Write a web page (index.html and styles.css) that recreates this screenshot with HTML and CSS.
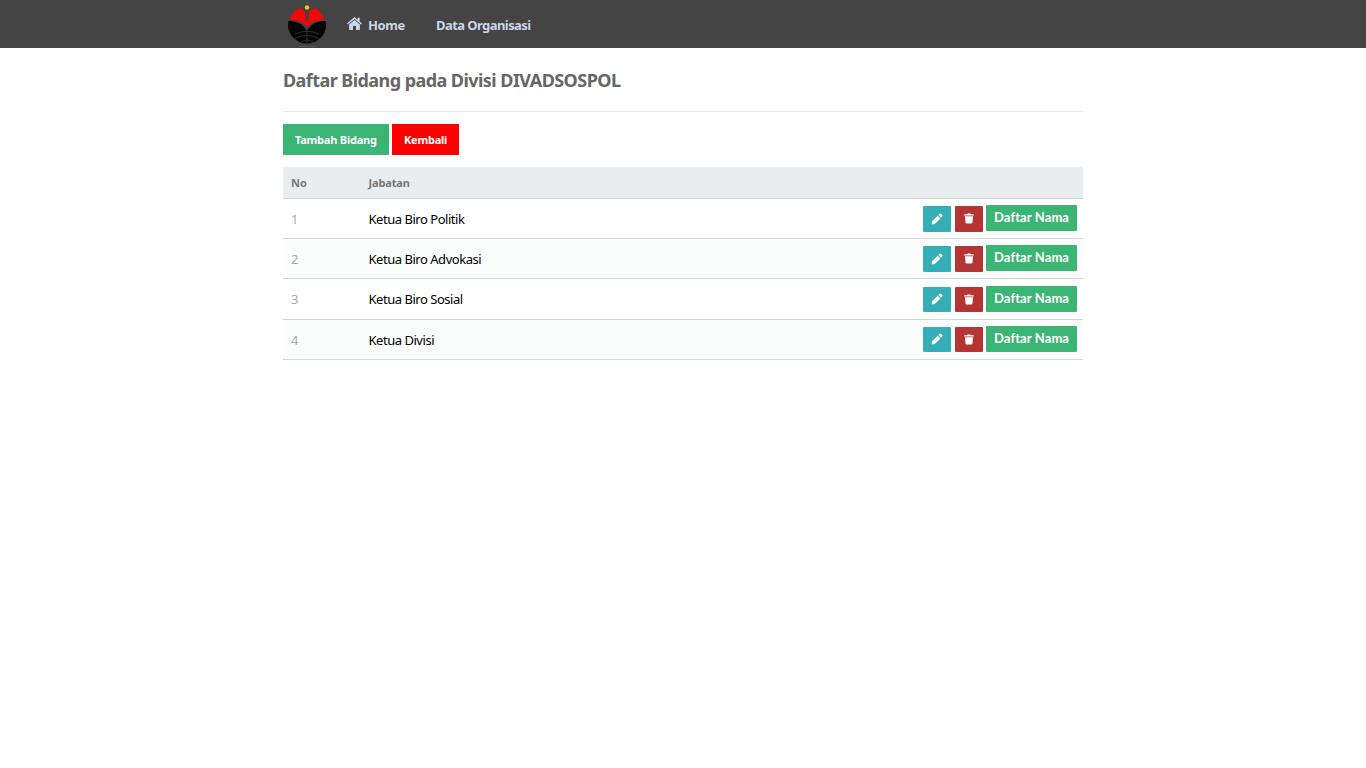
FILE: index.html
```html
<!DOCTYPE html>
<html lang="id">
<head>
<meta charset="utf-8">
<title>Daftar Bidang</title>
<link rel="stylesheet" href="styles.css">
</head>
<body>
<svg width="0" height="0" class="defs">
  <symbol id="pencil" viewBox="0 0 12 12"><path d="M.5 11.5l.6-3.200L6.600 2.700l2.700 2.700-5.500 5.500zM7.200 2.100L8.500.8q.7-.6 1.400 0l1.300 1.300q.6.7 0 1.400L9.900 4.800z"/></symbol>
  <symbol id="trash" viewBox="0 0 10 11"><path d="M.2 1.200h2.900L3.600.4h2.800l.5.800h2.900v1.300H.2zM1 3.200h8l-.5 6.400q-.1 1-1.100 1H2.600q-1 0-1.100-1z"/></symbol>
</svg>
<header class="topbar">
  <nav class="container nav">
    <svg class="logo" viewBox="0 0 40 46">
      <path fill="#f90505" d="M2.500 17.500Q6 9.500 12.500 6L18 9.500 18.500 17H21.500L22 9.500 27.500 6Q34 9.500 37.500 17.500 26 17.500 20 25 14 17.500 2.500 17.500z"/>
      <path fill="#050505" d="M1.500 19Q14 18 20 29 26 18 38.500 19 40.500 28 34 35.500 28 41.500 20 41.500 12 41.500 6 35.500-.5 28 1.500 19z"/>
      <path fill="none" stroke="#70302d" d="M18.200 8.500L19 20M21.800 8.500L21 20"/>
      <path fill="none" stroke="#333" stroke-width=".9" d="M8 32Q20 26.500 32 32M8 36.500Q20 30.500 32 36.500M14 40Q20 36 26 40M20 29V41"/>
      <circle cx="20" cy="5.500" r="2.200" fill="#dccb1c"/>
      <path stroke="#555" d="M12 44.500H28"/>
    </svg>
    <a class="home"><svg class="house" viewBox="0 0 15 13"><path d="M7.500 0L10.600 2.700V.7h2.100v3.800L15 6.600l-.9 1L7.500 2 .9 7.600 0 6.600z"/><path d="M7.500 2.900l5.400 4.600V13H9V9H6v4H2.100V7.500z"/></svg><span>Home</span></a>
    <a class="data"><span>Data Organisasi</span></a>
  </nav>
</header>
<main class="container">
  <h1>Daftar Bidang pada Divisi DIVADSOSPOL</h1>
  <div class="actions"><a class="add">Tambah Bidang</a><a class="back">Kembali</a></div>
  <div class="table">
    <div class="head"><b class="no">No</b><b class="position">Jabatan</b></div>
    <div class="row"><span class="no">1</span><span class="name">Ketua Biro Politik</span><div class="tools"><a class="edit"><svg><use href="#pencil"/></svg></a><a class="delete"><svg><use href="#trash"/></svg></a><a class="list">Daftar Nama</a></div></div>
    <div class="row even"><span class="no">2</span><span class="name">Ketua Biro Advokasi</span><div class="tools"><a class="edit"><svg><use href="#pencil"/></svg></a><a class="delete"><svg><use href="#trash"/></svg></a><a class="list">Daftar Nama</a></div></div>
    <div class="row tall"><span class="no">3</span><span class="name">Ketua Biro Sosial</span><div class="tools"><a class="edit"><svg><use href="#pencil"/></svg></a><a class="delete"><svg><use href="#trash"/></svg></a><a class="list">Daftar Nama</a></div></div>
    <div class="row even"><span class="no">4</span><span class="name">Ketua Divisi</span><div class="tools"><a class="edit"><svg><use href="#pencil"/></svg></a><a class="delete"><svg><use href="#trash"/></svg></a><a class="list">Daftar Nama</a></div></div>
  </div>
</main>
</body>
</html>
```
FILE: styles.css
```css
* { box-sizing: border-box; }
body { margin: 0; background: #fff; font-family: "Segoe UI", "Noto Sans", "Open Sans", sans-serif; white-space: nowrap; }
.defs { display: block; height: 0; }
.container { width: 800px; margin: 0 auto; }
.topbar { height: 48px; background: #444; }
.nav { display: flex; height: 48px; padding-left: 4px; color: #cad5e8; font-size: 13px; font-weight: 700; line-height: 20px; }
.logo { width: 40px; height: 46px; margin-top: 2px; }
.home { display: flex; width: 89px; margin-left: 20px; padding-top: 15px; letter-spacing: -.4px; }
.house { width: 15px; height: 13px; margin: 2px 6px 0 0; fill: #cad5e8; }
.data { padding-top: 15px; letter-spacing: -.57px; }
h1 { height: 64px; margin: 0 0 12px; padding-top: 20px; border-bottom: 1px solid #e8e8e8; color: #666; font-size: 18px; line-height: 25px; letter-spacing: -.56px; }
.actions { display: flex; gap: 3px; height: 31px; margin-bottom: 12px; }
.actions a { padding-left: 12px; color: #fff; font-size: 11px; font-weight: 700; line-height: 31px; letter-spacing: -.22px; }
.add { width: 106px; background: #3bb573; }
.back { width: 67px; background: #f00; }
.head { display: flex; height: 32px; padding-left: 8px; background: #e9edf0; border-bottom: 1px solid #d0d7dd; color: #777; font-size: 11px; line-height: 32px; }
.position { letter-spacing: -.15px; }
.no { width: 77.500px; }
.row { display: flex; height: 40px; padding: 0 6px 0 8px; border-bottom: 1px solid #d0d7dd; font-size: 13px; line-height: 41px; }
.row .no { color: #aaa; }
.name { flex: 1; color: #000; letter-spacing: -.47px; }
.even { background: #fbfdfc; }
.tall { height: 41px; }
.tools { display: flex; gap: 4px; padding-top: 6px; }
.tools a { height: 26px; border-radius: 1px; }
.edit, .delete { display: flex; align-items: center; justify-content: center; width: 28px; margin-top: 1px; padding-bottom: 1px; }
.edit { background: #36aeb8; }
.delete { background: #b53535; }
.tools svg { width: 12px; height: 12px; fill: #fff; }
.tools .delete svg { width: 10px; height: 11px; }
.tools .list { width: 91px; margin-left: -1px; padding-left: 8px; background: #3bb573; color: #fff; font-family: "Lato", sans-serif; font-size: 13px; font-weight: 700; line-height: 25px; letter-spacing: .1px; }
.tall .tools { padding-top: 7px; }
.tall .edit, .tall .delete, .tall + .row .edit, .tall + .row .delete { height: 25px; }
```
